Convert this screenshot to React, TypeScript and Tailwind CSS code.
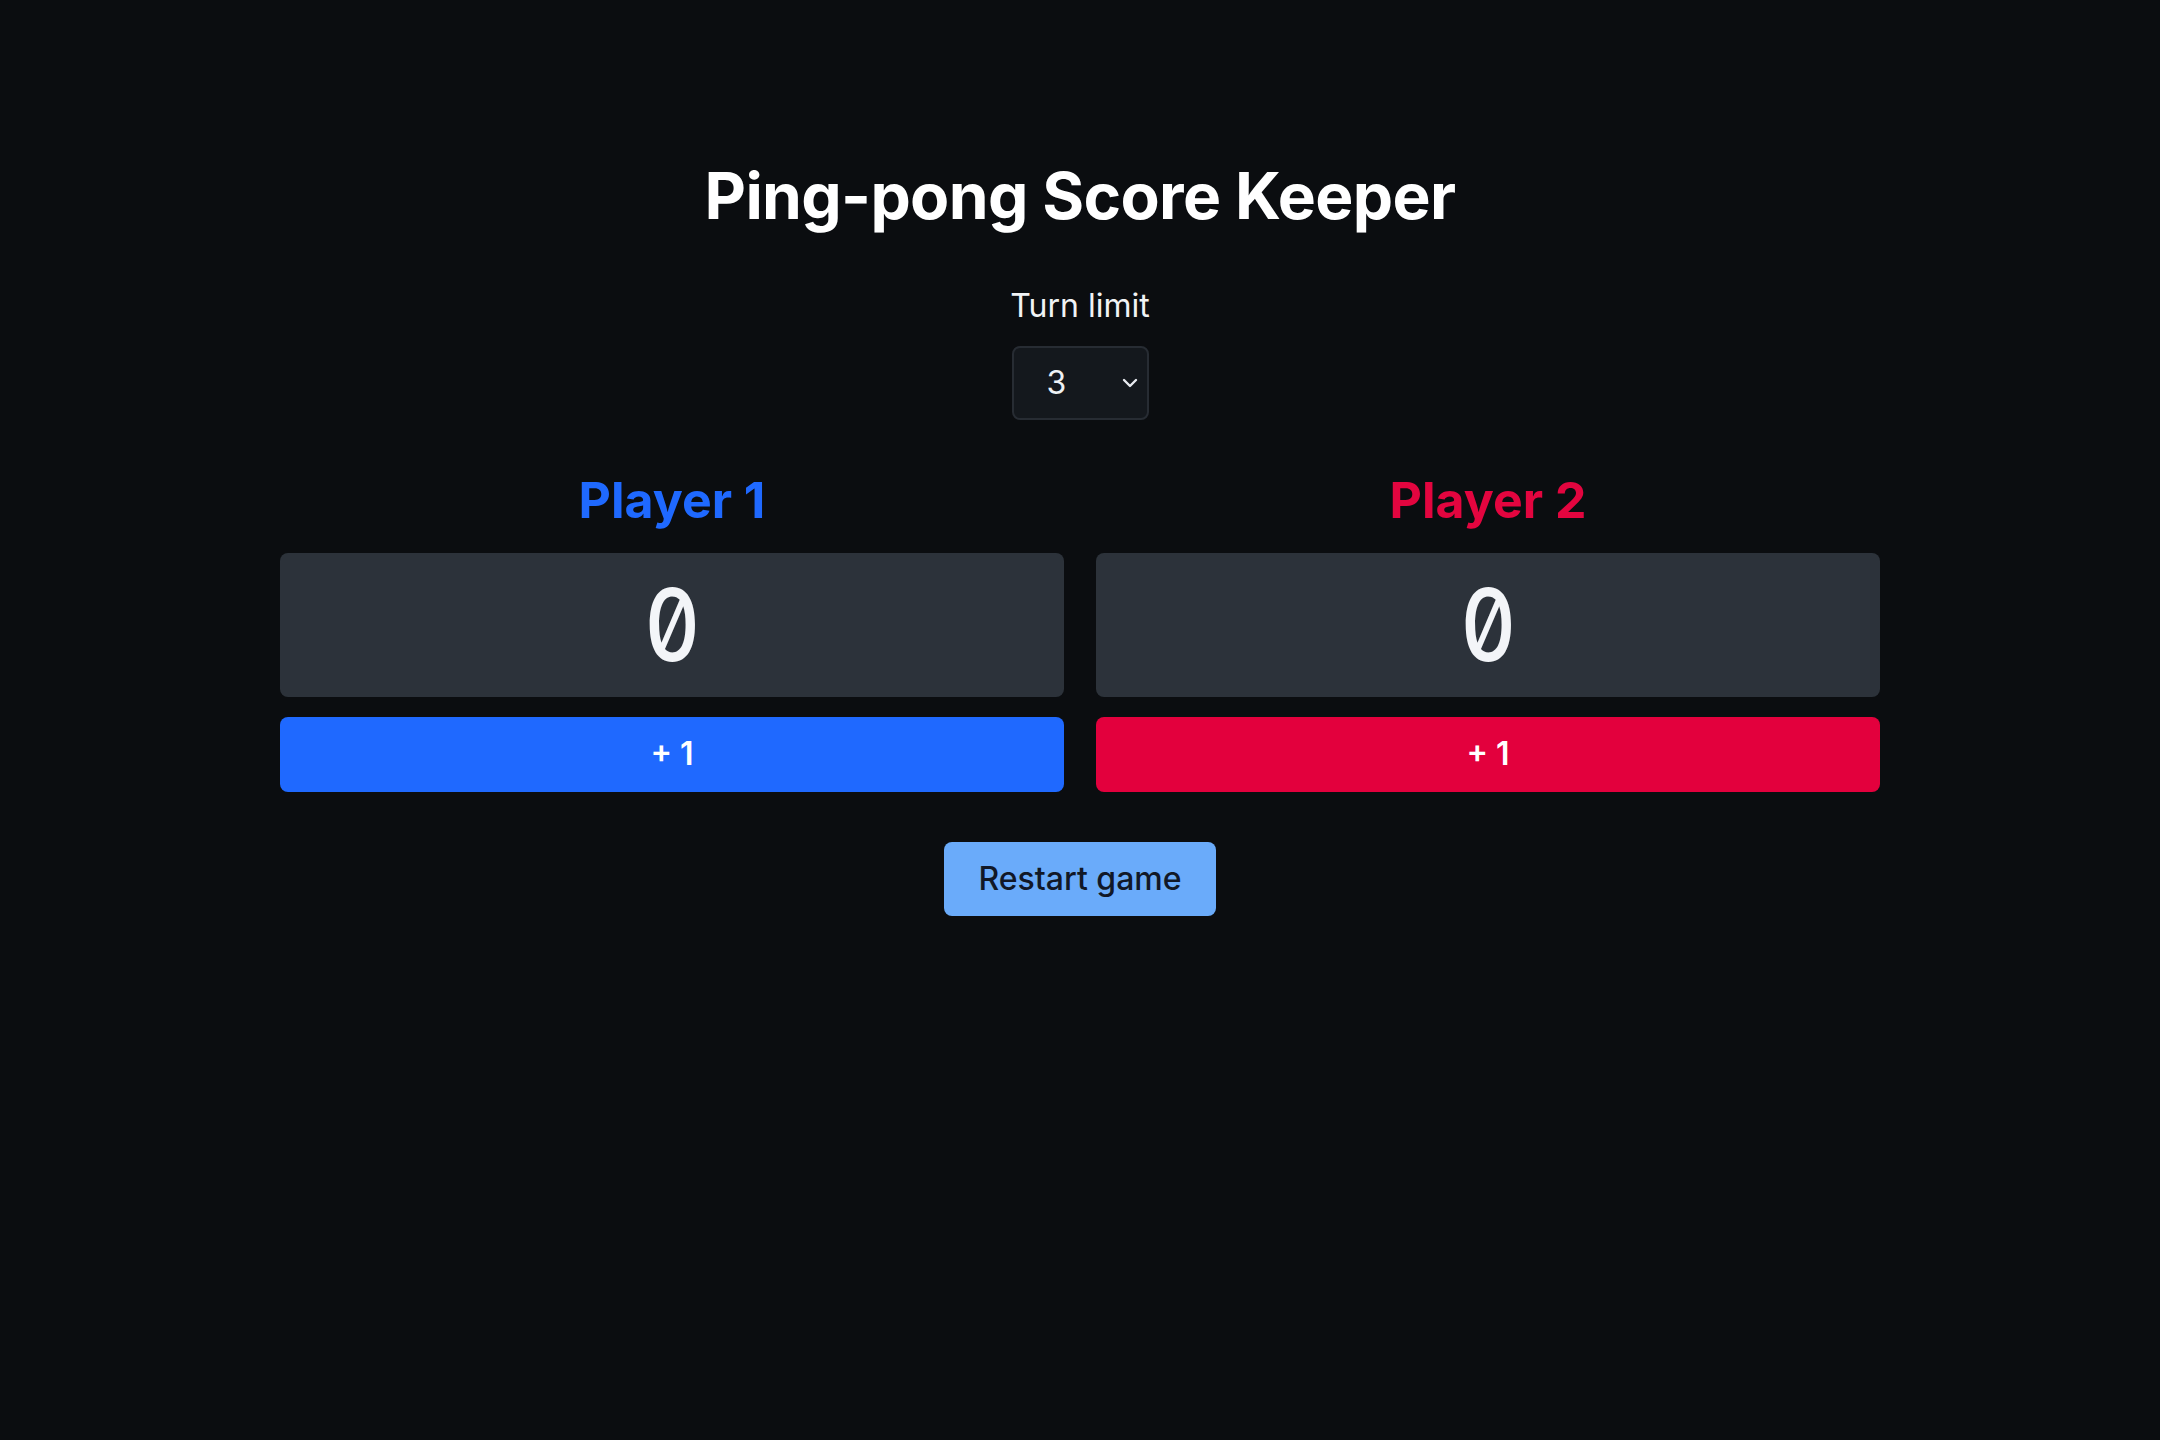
import React, { useState } from 'react';

const PlayerColumn: React.FC<{
  name: string;
  score: number;
  heading: string;
  button: string;
  onAdd: () => void;
}> = ({ name, score, heading, button, onAdd }) => (
  <div className="flex flex-col">
    <h2 className={`text-center text-[50px] font-bold leading-[1.2] ${heading}`}>{name}</h2>
    <div className="mt-[23px] flex h-[144px] items-center justify-center rounded-lg bg-[#2c323a]">
      <span className="inline-block scale-x-[0.86] text-[100px] font-medium leading-none text-[#f3f5f8] slashed-zero tabular-nums">
        {score}
      </span>
    </div>
    <button
      onClick={onAdd}
      className={`mt-[20px] h-[75px] rounded-lg text-[32px] font-semibold text-white ${button}`}
    >
      + 1
    </button>
  </div>
);

export default function App() {
  const [limit, setLimit] = useState('3');
  const [p1, setP1] = useState(0);
  const [p2, setP2] = useState(0);

  return (
    <div className="min-h-screen bg-[#0b0d10] pt-[158px] text-white [font-family:Inter,'Noto_Sans',sans-serif]">
      <h1 className="text-center text-[64px] font-bold leading-[1.2] tracking-[-0.01em]">Ping-pong Score Keeper</h1>

      <div className="mt-[47px] flex flex-col items-center">
        <label htmlFor="limit" className="text-[32px] leading-[1.5] text-[#f1f3f5]">
          Turn limit
        </label>
        <div className="relative mt-4">
          <select
            id="limit"
            value={limit}
            onChange={(e) => setLimit(e.target.value)}
            className="h-[74px] w-[137px] appearance-none rounded-lg border-2 border-[#272c33] bg-[#14181d] pl-[33px] text-[32px] text-[#eef1f4] outline-none"
          >
            {[3, 5, 7, 9, 11].map((n) => (
              <option key={n} value={n}>
                {n}
              </option>
            ))}
          </select>
          <svg
            className="pointer-events-none absolute right-[11px] top-[32px]"
            width="16"
            height="10"
            viewBox="0 0 16 10"
            fill="none"
            stroke="#e8ebef"
            strokeWidth="2.4"
            strokeLinecap="round"
            strokeLinejoin="round"
          >
            <path d="M2 2l6 6 6-6" />
          </svg>
        </div>
      </div>

      <div className="mx-auto mt-[50px] grid w-[1600px] grid-cols-2 gap-8">
        <PlayerColumn
          name="Player 1"
          score={p1}
          heading="text-[#1f69ff]"
          button="bg-[#1f69ff]"
          onAdd={() => setP1(p1 + 1)}
        />
        <PlayerColumn
          name="Player 2"
          score={p2}
          heading="text-[#e3053f]"
          button="bg-[#e3003d]"
          onAdd={() => setP2(p2 + 1)}
        />
      </div>

      <div className="mt-[50px] flex justify-center">
        <button
          onClick={() => {
            setP1(0);
            setP2(0);
          }}
          className="h-[74px] rounded-lg bg-[#6aabfa] px-[34px] text-[32px] font-medium text-[#111827]"
        >
          Restart game
        </button>
      </div>
    </div>
  );
}
